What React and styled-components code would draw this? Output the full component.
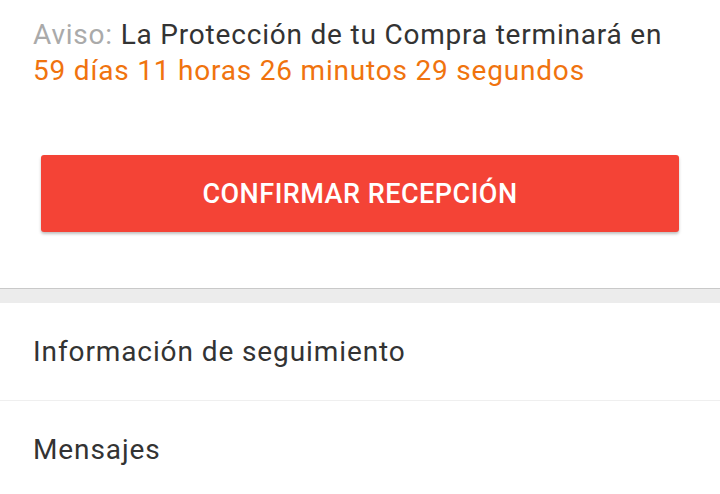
import React from 'react'
import styled, { createGlobalStyle } from 'styled-components'

const GlobalStyle = createGlobalStyle`
  html, body {
    margin: 0;
    padding: 0;
    background: #ffffff;
  }
  body {
    font-family: Roboto, "Noto Sans", "Liberation Sans", sans-serif;
    -webkit-font-smoothing: antialiased;
  }
`

const countdown = { days: 59, hours: 11, minutes: 26, seconds: 29 }

export default function App() {
  return (
    <Page>
      <GlobalStyle />
      <NoticeCard>
        <Notice>
          <NoticeLabel>Aviso:</NoticeLabel> La Protección de tu Compra terminará en
          <Countdown>
            {countdown.days} días {countdown.hours} horas {countdown.minutes} minutos {countdown.seconds} segundos
          </Countdown>
        </Notice>
        <ConfirmButton type="button">CONFIRMAR RECEPCIÓN</ConfirmButton>
      </NoticeCard>
      <SectionGap />
      <MenuList>
        <MenuItem>Información de seguimiento</MenuItem>
        <MenuItem>Mensajes</MenuItem>
      </MenuList>
    </Page>
  )
}

const Page = styled.div`
  width: 720px;
  height: 494px;
  overflow: hidden;
  background: #ffffff;
`

const NoticeCard = styled.div`
  display: flex;
  flex-direction: column;
  padding: 17px 41px 0 33px;
  box-sizing: border-box;
  height: 288px;
`

const Notice = styled.p`
  margin: 0;
  font-size: 28px;
  line-height: 36px;
  letter-spacing: 0.8px;
  color: #333333;
`

const NoticeLabel = styled.span`
  color: #aaaaaa;
`

const Countdown = styled.span`
  display: block;
  color: #f0730e;
`

const ConfirmButton = styled.button`
  margin: 66px 0 0 8px;
  height: 77px;
  border: none;
  border-radius: 3px;
  background: #f44336;
  color: #ffffff;
  font-family: Roboto, "Noto Sans", "Liberation Sans", sans-serif;
  font-size: 27px;
  font-weight: 500;
  letter-spacing: 0.5px;
  box-shadow: 0 2px 3px rgba(0, 0, 0, 0.25);
  cursor: pointer;
`

const SectionGap = styled.div`
  height: 15px;
  background: #ececec;
  border-top: 1px solid #c9c9c9;
  box-sizing: border-box;
`

const MenuList = styled.div`
  display: flex;
  flex-direction: column;
`

const MenuItem = styled.div`
  display: flex;
  align-items: center;
  height: 97px;
  padding-left: 33px;
  font-size: 28px;
  letter-spacing: 0.9px;
  color: #333333;
  border-bottom: 1px solid #efefef;
`
